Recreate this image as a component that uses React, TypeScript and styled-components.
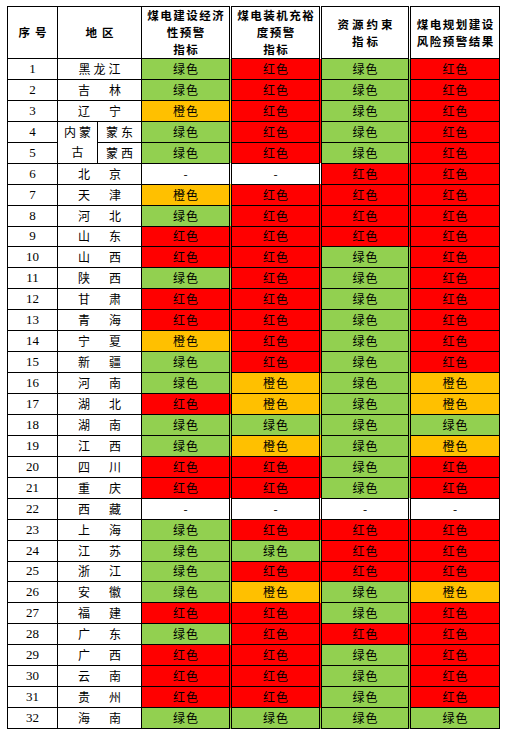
import React from "react";
import styled, { createGlobalStyle } from "styled-components";

const GlobalStyle = createGlobalStyle`
  body {
    margin: 0;
    background: #ffffff;
  }
`;

const Page = styled.div`
  padding: 6px 0 0 7px;
`;

const Table = styled.table`
  border-collapse: collapse;
  table-layout: fixed;
  width: 492px;
  border: 1px solid #000;
  font-family: "Noto Sans CJK SC", "Liberation Serif", serif;
  color: #000;
`;

const HeadRow = styled.tr`
  height: 51px;
`;

const Row = styled.tr`
  height: 20.94px;
`;

const HeadCell = styled.th<{ $double?: boolean; $spacing?: number }>`
  border: 1px solid #000;
  border-left: ${({ $double }) => ($double ? "3px double #000" : "1px solid #000")};
  padding: 0 0 0 ${({ $spacing }) => $spacing ?? 1.5}px;
  font-size: 11.5px;
  font-weight: 700;
  line-height: 17px;
  letter-spacing: ${({ $spacing }) => $spacing ?? 1.5}px;
  text-align: center;
  vertical-align: middle;
  white-space: nowrap;
`;

const NumCell = styled.td`
  border: 1px solid #000;
  padding: 0;
  font-family: "Liberation Serif", serif;
  font-size: 13px;
  text-align: center;
  line-height: 18px;
`;

const RegionCell = styled.td<{ $spacing: number }>`
  border: 1px solid #000;
  padding: 0 0 0 ${({ $spacing }) => $spacing}px;
  font-size: 12px;
  line-height: 18px;
  letter-spacing: ${({ $spacing }) => $spacing}px;
  text-align: center;
  white-space: nowrap;
`;

const MergedRegion = styled.td`
  border: 1px solid #000;
  padding: 0 0 0 3px;
  font-size: 12px;
  line-height: 20px;
  letter-spacing: 3px;
  text-align: center;
`;

type Level = "g" | "r" | "o" | "n";

const fills: Record<Level, string> = {
  g: "#92d050",
  r: "#ff0000",
  o: "#ffc000",
  n: "#ffffff",
};

const labels: Record<Level, string> = {
  g: "绿色",
  r: "红色",
  o: "橙色",
  n: "-",
};

const StatusCell = styled.td<{ $level: Level; $double?: boolean }>`
  border: 1px solid #000;
  border-left: ${({ $double }) => ($double ? "3px double #000" : "1px solid #000")};
  padding: 0 0 0 1px;
  background: ${({ $level }) => fills[$level]};
  font-size: 12px;
  line-height: 18px;
  letter-spacing: 1px;
  text-align: center;
`;

const rows: [number, string, string][] = [
  [1, "黑龙江", "grgr"],
  [2, "吉林", "grgr"],
  [3, "辽宁", "orgr"],
  [4, "蒙东", "grgr"],
  [5, "蒙西", "grgr"],
  [6, "北京", "nnrr"],
  [7, "天津", "orrr"],
  [8, "河北", "grrr"],
  [9, "山东", "rrrr"],
  [10, "山西", "rrgr"],
  [11, "陕西", "grgr"],
  [12, "甘肃", "rrgr"],
  [13, "青海", "rrgr"],
  [14, "宁夏", "orgr"],
  [15, "新疆", "grgr"],
  [16, "河南", "gogo"],
  [17, "湖北", "rogo"],
  [18, "湖南", "gggg"],
  [19, "江西", "gogo"],
  [20, "四川", "rrgr"],
  [21, "重庆", "rrgr"],
  [22, "西藏", "nnnn"],
  [23, "上海", "grrr"],
  [24, "江苏", "ggrr"],
  [25, "浙江", "grrr"],
  [26, "安徽", "gogo"],
  [27, "福建", "rrgr"],
  [28, "广东", "grrr"],
  [29, "广西", "rrgr"],
  [30, "云南", "rrgr"],
  [31, "贵州", "rrgr"],
  [32, "海南", "gggg"],
];

const App: React.FC = () => {
  return (
    <Page>
      <GlobalStyle />
      <Table>
        <colgroup>
          <col style={{ width: 50 }} />
          <col style={{ width: 40 }} />
          <col style={{ width: 44 }} />
          <col style={{ width: 89 }} />
          <col style={{ width: 90 }} />
          <col style={{ width: 89 }} />
          <col style={{ width: 90 }} />
        </colgroup>
        <thead>
          <HeadRow>
            <HeadCell $spacing={5}>序号</HeadCell>
            <HeadCell colSpan={2} $spacing={5}>
              地区
            </HeadCell>
            <HeadCell>
              煤电建设经济
              <br />
              性预警
              <br />
              指标
            </HeadCell>
            <HeadCell $double>
              煤电装机充裕
              <br />
              度预警
              <br />
              指标
            </HeadCell>
            <HeadCell $double $spacing={3}>
              资源约束
              <br />
              指标
            </HeadCell>
            <HeadCell $double>
              煤电规划建设
              <br />
              风险预警结果
            </HeadCell>
          </HeadRow>
        </thead>
        <tbody>
          {rows.map(([no, region, levels]) => {
            let regionCells: React.ReactNode;
            if (no === 4) {
              regionCells = (
                <>
                  <MergedRegion rowSpan={2}>
                    内蒙
                    <br />古
                  </MergedRegion>
                  <RegionCell $spacing={3}>{region}</RegionCell>
                </>
              );
            } else if (no === 5) {
              regionCells = <RegionCell $spacing={3}>{region}</RegionCell>;
            } else {
              regionCells = (
                <RegionCell colSpan={2} $spacing={region.length === 2 ? 19 : 3}>
                  {region}
                </RegionCell>
              );
            }
            return (
              <Row key={no}>
                <NumCell>{no}</NumCell>
                {regionCells}
                {(levels.split("") as Level[]).map((lv, i) => (
                  <StatusCell key={i} $level={lv} $double={i > 0}>
                    {labels[lv]}
                  </StatusCell>
                ))}
              </Row>
            );
          })}
        </tbody>
      </Table>
    </Page>
  );
};

export default App;
